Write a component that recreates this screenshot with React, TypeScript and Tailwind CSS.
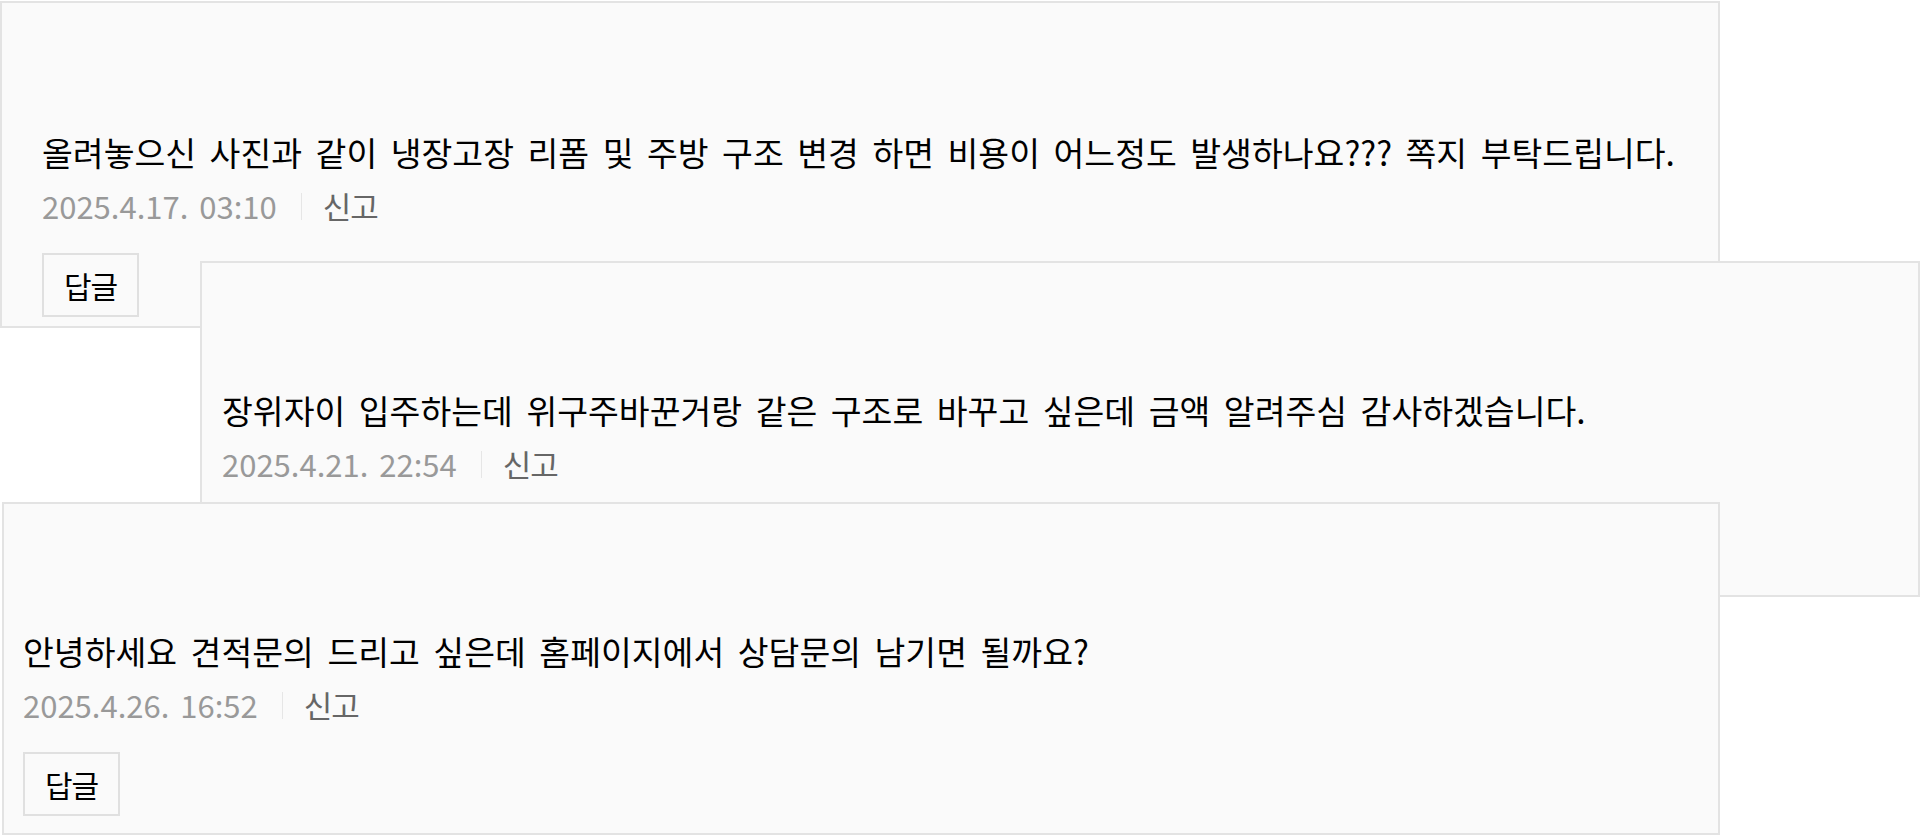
import React from "react";

type Comment = {
  body: string;
  date: string;
  reply: boolean;
  pos: string;
  pad: string;
};

const comments: Comment[] = [
  {
    body: "올려놓으신 사진과 같이 냉장고장 리폼 및 주방 구조 변경 하면 비용이 어느정도 발생하나요??? 쪽지 부탁드립니다.",
    date: "2025.4.17. 03:10",
    reply: true,
    pos: "left-0 top-[1px] w-[1720px] h-[327px] z-10",
    pad: "pl-[40px] pt-[125px]",
  },
  {
    body: "장위자이 입주하는데 위구주바꾼거랑 같은 구조로 바꾸고 싶은데 금액 알려주심 감사하겠습니다.",
    date: "2025.4.21. 22:54",
    reply: false,
    pos: "left-[200px] top-[261px] w-[1720px] h-[336px] z-20",
    pad: "pl-[20px] pt-[123px]",
  },
  {
    body: "안녕하세요 견적문의 드리고 싶은데 홈페이지에서 상담문의 남기면 될까요?",
    date: "2025.4.26. 16:52",
    reply: true,
    pos: "left-[2px] top-[502px] w-[1718px] h-[333px] z-30",
    pad: "pl-[19px] pt-[123px]",
  },
];

const CommentCard = ({ c }: { c: Comment }) => (
  <div
    className={`absolute ${c.pos} ${c.pad} flex flex-col items-start border-2 border-[#e3e3e3] bg-[#fafafa]`}
  >
    <p className="text-[33.5px] leading-[48px] [word-spacing:6px] text-[#000]">
      {c.body}
    </p>
    <div className="mt-[10px] flex items-center text-[31px] leading-[40px]">
      <span className="text-[#999] [word-spacing:4px]">{c.date}</span>
      <span className="ml-[24px] mr-[21px] h-[27px] w-px bg-[#e6e6e6]" />
      <button className="text-[#666] tracking-[-1px]">신고</button>
    </div>
    {c.reply && (
      <button className="mt-[27px] flex h-[64px] w-[97px] items-center justify-center border-2 border-[#e0e0e0] bg-[#fafafa] text-[30px] tracking-[-1px] text-[#000]">
        답글
      </button>
    )}
  </div>
);

export default function App() {
  return (
    <div className="relative h-[835px] w-[1920px] overflow-hidden bg-white font-['Noto_Sans_CJK_KR',sans-serif]">
      {comments.map((c) => (
        <CommentCard key={c.date} c={c} />
      ))}
    </div>
  );
}
